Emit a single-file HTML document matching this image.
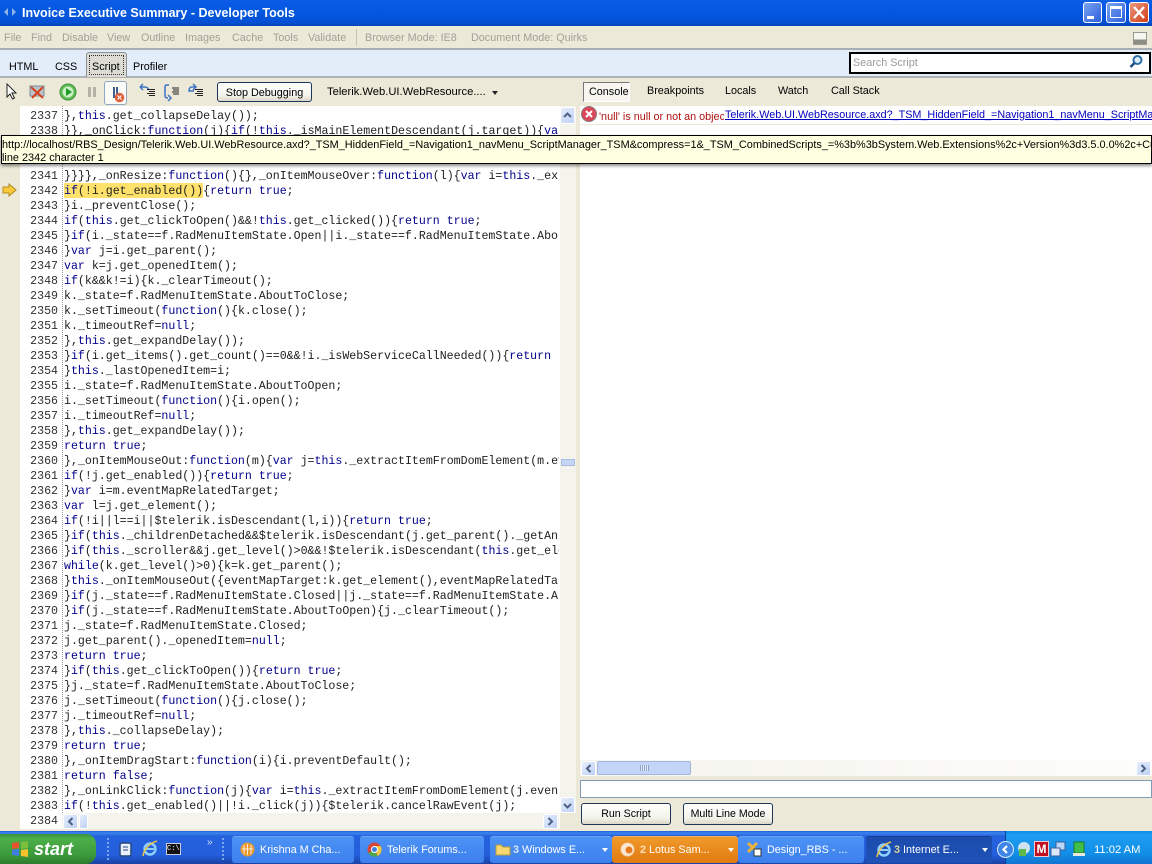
<!DOCTYPE html>
<html><head><meta charset="utf-8"><title>Invoice Executive Summary - Developer Tools</title>
<style>
html,body{margin:0;padding:0;width:1152px;height:864px;overflow:hidden;background:#ece9d8;font-family:"Liberation Sans",sans-serif;font-size:10.8px;color:#000}
.a,.t{position:absolute}
.t{white-space:nowrap;line-height:14px}
.m{color:#a3a196}
#code{position:absolute;left:64px;top:109px;width:495px;height:720px;overflow:hidden;font:11.6px/15px "Liberation Mono",monospace;color:#202020;white-space:pre}
#nums{position:absolute;left:20px;top:109px;width:38px;height:720px;overflow:hidden;text-align:right;font:11.6px/15px "Liberation Mono",monospace;color:#303030;white-space:pre}
#code i{font-style:normal;color:#00008b}
.hl{background:#ffe26b}
.sb{position:absolute;width:15px;height:15px;background:linear-gradient(135deg,#e6eefc,#bdd0f5);border:1px solid #fff;box-sizing:border-box;border-radius:2px}
.sb svg{position:absolute;left:1px;top:1px}
.btn{position:absolute;box-sizing:border-box;border:1px solid #1c3558;border-radius:3px;background:linear-gradient(#fff,#f3f2ea 70%,#dcd8c8);text-align:center;line-height:20px}
.tb{position:absolute;top:836px;height:27px;box-sizing:border-box;border-radius:3px;background:linear-gradient(#4d92f4,#3c80ee);color:#fff;font-size:10.8px;line-height:27px;white-space:nowrap;overflow:hidden;border-top:1px solid #6aa5f7}
</style></head><body>
<div class="a" style="left:0;top:0;width:1152px;height:26px;background:linear-gradient(#0a5fe0 0,#0a5be8 2px,#0358df 12px,#0450d6 22px,#0644b8)"></div>
<svg class="a" style="left:2px;top:5px" width="16" height="14"><path d="M2 7l4-4v8zM14 7l-4-4v8z" fill="#8fb2e6"/></svg>
<div class="t" style="left:22px;top:5px;color:#fff;font-weight:bold;font-size:12.5px;line-height:16px">Invoice Executive Summary - Developer Tools</div>
<div class="a" style="left:1083px;top:2px;width:19px;height:21px;box-sizing:border-box;background:linear-gradient(135deg,#7aa4f2,#2c5fdc);border:1px solid #fff;border-radius:3px"><div class="a" style="left:3px;top:13px;width:7px;height:3px;background:#fff"></div></div>
<div class="a" style="left:1106px;top:2px;width:20px;height:21px;box-sizing:border-box;background:linear-gradient(135deg,#7aa4f2,#2c5fdc);border:1px solid #fff;border-radius:3px"><div class="a" style="left:3px;top:3px;width:12px;height:12px;box-sizing:border-box;border:1.5px solid #fff;border-top-width:3px"></div></div>
<div class="a" style="left:1129px;top:2px;width:20px;height:21px;box-sizing:border-box;background:linear-gradient(135deg,#ea9a80,#d03c14);border:1px solid #fff;border-radius:3px"><svg class="a" style="left:2px;top:2px" width="14" height="15"><path d="M2 2l10 11M12 2L2 13" stroke="#fff" stroke-width="2.400"/></svg></div>

<div class="a" style="left:0;top:26px;width:1152px;height:22px;background:#ece9d8;border-bottom:2px solid #a9adb4"></div>
<div class="t m" style="left:4px;top:31px">File</div><div class="t m" style="left:31px;top:31px">Find</div><div class="t m" style="left:62px;top:31px">Disable</div><div class="t m" style="left:107px;top:31px">View</div><div class="t m" style="left:141px;top:31px">Outline</div><div class="t m" style="left:185px;top:31px">Images</div><div class="t m" style="left:232px;top:31px">Cache</div><div class="t m" style="left:273px;top:31px">Tools</div><div class="t m" style="left:308px;top:31px">Validate</div>
<div class="a" style="left:356px;top:29px;width:1px;height:17px;background:#c8c5b4"></div>
<div class="t m" style="left:365px;top:31px">Browser Mode: IE8</div><div class="t m" style="left:471px;top:31px">Document Mode: Quirks</div>
<div class="a" style="left:1133px;top:32px;width:14px;height:13px;box-sizing:border-box;border:1px solid #9a9a92;background:linear-gradient(#f6f6f0 60%,#8e8e86 60%)"></div>

<div class="a" style="left:0;top:50px;width:1152px;height:26px;background:#e3edf9;border-bottom:2px solid #b0b3b5"></div>
<div class="t" style="left:9px;top:60px">HTML</div><div class="t" style="left:55px;top:60px">CSS</div>
<div class="a" style="left:86px;top:52px;width:41px;height:25px;box-sizing:border-box;border:1px solid #8c9097;border-bottom:0;border-radius:3px 3px 0 0;background:#dcdcd4"></div>
<div class="a" style="left:89px;top:55px;width:35px;height:20px;box-sizing:border-box;border:1px dotted #333"></div>
<div class="t" style="left:92px;top:60px">Script</div><div class="t" style="left:133px;top:60px">Profiler</div>
<div class="a" style="left:849px;top:52px;width:302px;height:22px;box-sizing:border-box;border:2px solid #000;background:#fff"></div>
<div class="t" style="left:853px;top:56px;color:#9a9a9a">Search Script</div>
<svg class="a" style="left:1128px;top:54px" width="16" height="16"><circle cx="9.500" cy="6" r="4" fill="#dceaf7" stroke="#2a6fa8" stroke-width="2"/><path d="M6.500 9L2.500 13" stroke="#1d4f86" stroke-width="2.600"/></svg>

<div class="a" style="left:0;top:78px;width:1152px;height:28px;background:#ece9d8"></div>
<svg class="a" style="left:5px;top:83px" width="15" height="18"><path d="M2 1v13l3-3 2.500 5 2-1-2.500-5h4z" fill="#fff" stroke="#222"/></svg>
<svg class="a" style="left:28px;top:84px" width="18" height="16"><rect x="2" y="2" width="14" height="10" fill="#b9c3c9" stroke="#7d8a94"/><path d="M3 3l12 11M15 3L4 14" stroke="#d8401e" stroke-width="2"/></svg>
<svg class="a" style="left:59px;top:83px" width="18" height="18"><circle cx="9" cy="9" r="8" fill="#5fbf52" stroke="#3f8e3a"/><circle cx="9" cy="9" r="5.500" fill="#cdeec6"/><path d="M7 5l6 4-6 4z" fill="#1d9a2a"/></svg>
<div class="a" style="left:88px;top:87px;width:3px;height:10px;background:#b4b2a6"></div><div class="a" style="left:93px;top:87px;width:3px;height:10px;background:#b4b2a6"></div>
<div class="a" style="left:104px;top:81px;width:23px;height:24px;box-sizing:border-box;border:1px solid #8fa6c4;border-radius:3px;background:#fbfbf8"></div>
<div class="a" style="left:113px;top:87px;width:2px;height:11px;background:#445d8c"></div><div class="a" style="left:116px;top:87px;width:2px;height:11px;background:#445d8c"></div>
<svg class="a" style="left:114px;top:92px" width="11" height="11"><circle cx="5.500" cy="5.500" r="4.800" fill="#e0603c"/><path d="M3.500 3.500l4 4M7.500 3.500l-4 4" stroke="#fff"/></svg>
<svg class="a" style="left:139px;top:83px" width="18" height="14"><path d="M1 4l3-3M1 4l3 3M1 4h5c2 0 3 1 4 3" fill="none" stroke="#3d74c4" stroke-width="1.500"/><path d="M8 6.500h8M10 8.500h6M8 10.500h8M10 12.500h6" stroke="#222"/></svg>
<svg class="a" style="left:163px;top:83px" width="18" height="20"><path d="M6 2H3.500C2.500 2 2 3 2 4v9c0 1.500 1 2 3 2M5 12l3 3-3 3" fill="none" stroke="#3d74c4" stroke-width="1.500"/><path d="M9 5h7M10 7h6M9 9h7M10 11h6" stroke="#222"/></svg>
<svg class="a" style="left:187px;top:83px" width="18" height="14"><path d="M9 4H5C3 4 2 5 2 8h5M6 1l3 3-3 3" fill="none" stroke="#3d74c4" stroke-width="1.500"/><path d="M8 6.500h8M10 8.500h6M8 10.500h8M10 12.500h6" stroke="#222"/></svg>
<div class="btn" style="left:217px;top:82px;width:95px;height:20px;line-height:20px">Stop Debugging</div>
<div class="t" style="left:327px;top:85px;font-size:11.2px">Telerik.Web.UI.WebResource....</div>
<div class="a" style="left:492px;top:91px;width:0;height:0;border:3px solid transparent;border-top:4px solid #222"></div>

<div class="a" style="left:20px;top:106px;width:540px;height:723px;background:#fff"></div>
<div class="a" style="left:62px;top:106px;height:723px;border-left:1px dotted #999"></div>
<div id="nums">2337
2338
2339
2340
2341
2342
2343
2344
2345
2346
2347
2348
2349
2350
2351
2352
2353
2354
2355
2356
2357
2358
2359
2360
2361
2362
2363
2364
2365
2366
2367
2368
2369
2370
2371
2372
2373
2374
2375
2376
2377
2378
2379
2380
2381
2382
2383
2384</div>
<div class="a hl" style="left:64px;top:183px;width:139px;height:15px"></div>
<div id="code">},<i>this</i>.get_collapseDelay());
}},_onClick:<i>function</i>(j){<i>if</i>(!<i>this</i>._isMainElementDescendant(j.target)){<i>var</i>
&nbsp;
&nbsp;
}}}},_onResize:<i>function</i>(){},_onItemMouseOver:<i>function</i>(l){<i>var</i> i=<i>this</i>._extractItem
<i>if</i>(!i.get_enabled()){<i>return true</i>;
}i._preventClose();
<i>if</i>(<i>this</i>.get_clickToOpen()&amp;&amp;!<i>this</i>.get_clicked()){<i>return true</i>;
}<i>if</i>(i._state==f.RadMenuItemState.Open||i._state==f.RadMenuItemState.AboutToOpen
}<i>var</i> j=i.get_parent();
<i>var</i> k=j.get_openedItem();
<i>if</i>(k&amp;&amp;k!=i){k._clearTimeout();
k._state=f.RadMenuItemState.AboutToClose;
k._setTimeout(<i>function</i>(){k.close();
k._timeoutRef=<i>null</i>;
},<i>this</i>.get_expandDelay());
}<i>if</i>(i.get_items().get_count()==0&amp;&amp;!i._isWebServiceCallNeeded()){<i>return</i>
}<i>this</i>._lastOpenedItem=i;
i._state=f.RadMenuItemState.AboutToOpen;
i._setTimeout(<i>function</i>(){i.open();
i._timeoutRef=<i>null</i>;
},<i>this</i>.get_expandDelay());
<i>return true</i>;
},_onItemMouseOut:<i>function</i>(m){<i>var</i> j=<i>this</i>._extractItemFromDomElement(m.eventMap
<i>if</i>(!j.get_enabled()){<i>return true</i>;
}<i>var</i> i=m.eventMapRelatedTarget;
<i>var</i> l=j.get_element();
<i>if</i>(!i||l==i||$telerik.isDescendant(l,i)){<i>return true</i>;
}<i>if</i>(<i>this</i>._childrenDetached&amp;&amp;$telerik.isDescendant(j.get_parent()._getAnimated
}<i>if</i>(<i>this</i>._scroller&amp;&amp;j.get_level()&gt;0&amp;&amp;!$telerik.isDescendant(<i>this</i>.get_element
<i>while</i>(k.get_level()&gt;0){k=k.get_parent();
}<i>this</i>._onItemMouseOut({eventMapTarget:k.get_element(),eventMapRelatedTarget:i
}<i>if</i>(j._state==f.RadMenuItemState.Closed||j._state==f.RadMenuItemState.AboutToClose
}<i>if</i>(j._state==f.RadMenuItemState.AboutToOpen){j._clearTimeout();
j._state=f.RadMenuItemState.Closed;
j.get_parent()._openedItem=<i>null</i>;
<i>return true</i>;
}<i>if</i>(<i>this</i>.get_clickToOpen()){<i>return true</i>;
}j._state=f.RadMenuItemState.AboutToClose;
j._setTimeout(<i>function</i>(){j.close();
j._timeoutRef=<i>null</i>;
},<i>this</i>._collapseDelay);
<i>return true</i>;
},_onItemDragStart:<i>function</i>(i){i.preventDefault();
<i>return false</i>;
},_onLinkClick:<i>function</i>(j){<i>var</i> i=<i>this</i>._extractItemFromDomElement(j.eventMap
<i>if</i>(!<i>this</i>.get_enabled()||!i._click(j)){$telerik.cancelRawEvent(j);</div>
<svg class="a" style="left:2px;top:183px" width="15" height="14"><path d="M1 4h6V1l7 6-7 6v-3H1z" fill="#fbc93a" stroke="#b08a20"/></svg>

<div class="a" style="left:560px;top:106px;width:16px;height:707px;background:#f4f3ec"></div>
<div class="sb" style="left:560px;top:107px;height:17px"><svg width="11" height="13"><path d="M2 8l3.500-3.500L9 8" fill="none" stroke="#4d6185" stroke-width="2"/></svg></div>
<div class="sb" style="left:560px;top:797px;height:16px"><svg width="11" height="13"><path d="M2 5l3.500 3.500L9 5" fill="none" stroke="#4d6185" stroke-width="2"/></svg></div>
<div class="a" style="left:561px;top:459px;width:14px;height:7px;background:#c6d6f7;border:1px solid #a9bce2;box-sizing:border-box"></div>
<div class="a" style="left:62px;top:813px;width:497px;height:16px;background:#f4f3ec"></div>
<div class="sb" style="left:63px;top:814px"><svg width="11" height="11"><path d="M7.500 2L4 5.500 7.500 9" fill="none" stroke="#4d6185" stroke-width="2"/></svg></div>
<div class="sb" style="left:79px;top:814px;width:9px"></div>
<div class="sb" style="left:543px;top:814px"><svg width="11" height="11"><path d="M3.500 2L7 5.500 3.500 9" fill="none" stroke="#4d6185" stroke-width="2"/></svg></div>

<div class="a" style="left:580px;top:106px;width:572px;height:654px;background:#fff"></div>
<div class="a" style="left:583px;top:82px;width:47px;height:20px;box-sizing:border-box;border:1px solid #777;border-right-color:#fff;border-bottom-color:#fff;background:#f6f5ef"></div>
<div class="t" style="left:589px;top:85px">Console</div><div class="t" style="left:647px;top:84px">Breakpoints</div><div class="t" style="left:725px;top:84px">Locals</div><div class="t" style="left:778px;top:84px">Watch</div><div class="t" style="left:831px;top:84px">Call Stack</div>
<div class="a" style="left:580px;top:124px;width:572px;height:1px;background:#ece9d8"></div>
<svg class="a" style="left:581px;top:106px" width="16" height="16"><circle cx="8" cy="8" r="7.500" fill="#d9475a" stroke="#8a7a7a"/><path d="M5 5l6 6M11 5l-6 6" stroke="#fff" stroke-width="2"/></svg>
<div class="t" style="left:599px;top:110px;width:125px;overflow:hidden;color:#b01010">'null' is null or not an object</div>
<div class="t" style="left:725px;top:108px;width:427px;overflow:hidden;color:#0000c0;text-decoration:underline">Telerik.Web.UI.WebResource.axd?_TSM_HiddenField_=Navigation1_navMenu_ScriptManager_TSM</div>

<div class="a" style="left:1px;top:135px;width:1151px;height:29px;box-sizing:border-box;background:#ffffe1;border:1px solid #000;box-shadow:0 2px 3px rgba(0,0,0,.45)"></div>
<div class="t" style="left:2px;top:138px;width:1150px;overflow:hidden;color:#000;font-size:10.9px">http://localhost/RBS_Design/Telerik.Web.UI.WebResource.axd?_TSM_HiddenField_=Navigation1_navMenu_ScriptManager_TSM&amp;compress=1&amp;_TSM_CombinedScripts_=%3b%3bSystem.Web.Extensions%2c+Version%3d3.5.0.0%2c+Culture</div>
<div class="t" style="left:2px;top:151px;font-size:10.9px">line 2342 character 1</div>

<div class="a" style="left:580px;top:760px;width:572px;height:16px;background:linear-gradient(90deg,#f4f3ec,#fdfdfb)"></div>
<div class="sb" style="left:581px;top:761px"><svg width="11" height="11"><path d="M7.500 2L4 5.500 7.500 9" fill="none" stroke="#4d6185" stroke-width="2"/></svg></div>
<div class="a" style="left:597px;top:761px;width:94px;height:14px;box-sizing:border-box;background:#c4d4f6;border:1px solid #a3b7e0;border-radius:2px"></div>
<div class="a" style="left:640px;top:765px;width:9px;height:6px;background:repeating-linear-gradient(90deg,#8ea3cc 0 1px,#e6eefc 1px 2px)"></div>
<div class="sb" style="left:1136px;top:761px"><svg width="11" height="11"><path d="M3.500 2L7 5.500 3.500 9" fill="none" stroke="#4d6185" stroke-width="2"/></svg></div>
<div class="a" style="left:580px;top:780px;width:572px;height:18px;box-sizing:border-box;background:#fff;border:1px solid #7f9db9"></div>
<div class="btn" style="left:581px;top:803px;width:90px;height:22px;font-size:10.6px">Run Script</div>
<div class="btn" style="left:683px;top:803px;width:90px;height:22px;font-size:10.6px">Multi Line Mode</div>

<div class="a" style="left:0;top:831px;width:1152px;height:33px;background:linear-gradient(#1f5fd8 0,#3d86ee 2px,#2662de 5px,#245edb 24px,#1941a5)"></div>
<div class="a" style="left:0;top:834px;width:96px;height:30px;border-radius:0 10px 10px 0;background:linear-gradient(#3a8f3a,#4caf48 15%,#3c9a3c 70%,#2d7a2d)"></div>
<svg class="a" style="left:10px;top:840px" width="20" height="18"><path d="M2 3l7-1v6l-7 1z" fill="#e5532d"/><path d="M11 2l7-1v7l-7 1z" fill="#7cbf3a"/><path d="M2 10l7-1v7l-7-1z" fill="#3f7fe0"/><path d="M11 10l7-1v8l-7-1z" fill="#f5c22e"/></svg>
<div class="t" style="left:34px;top:839px;color:#fff;font-weight:bold;font-style:italic;font-size:18px;line-height:20px">start</div>
<div class="a" style="left:107px;top:838px;height:22px;border-left:2px dotted #7aa8ee"></div>
<svg class="a" style="left:118px;top:841px" width="16" height="16"><rect x="2" y="2" width="11" height="13" rx="2" fill="#e8effa" stroke="#27477f" stroke-width="1.500"/><path d="M5 6h5M5 9h5" stroke="#27477f"/></svg>
<svg class="a" style="left:141px;top:840px" width="18" height="18"><ellipse cx="9" cy="9" rx="5.500" ry="5.500" fill="none" stroke="#8fd0ff" stroke-width="2.400"/><path d="M5 9h8" stroke="#8fd0ff" stroke-width="2"/><path d="M2 16C3 9 9 3 16 1" fill="none" stroke="#e8c24a" stroke-width="1.500"/></svg>
<div class="a" style="left:166px;top:843px;width:15px;height:12px;background:#111;border:1px solid #ccd;box-sizing:border-box;color:#fff;font:7px/10px 'Liberation Mono',monospace">C:\</div>
<div class="t" style="left:207px;top:836px;color:#cfe0fb;font-size:10px">»</div>
<div class="a" style="left:222px;top:838px;height:22px;border-left:2px dotted #7aa8ee"></div>

<div class="tb" style="left:232px;width:122px;padding-left:28px">Krishna M Cha...</div>
<svg class="a" style="left:240px;top:842px" width="15" height="15"><circle cx="7.500" cy="7.500" r="7" fill="#e89a32"/><path d="M4 3v9M7.500 2v11M11 3v9M2 7h11" stroke="#fff" stroke-width=".8"/></svg>
<div class="tb" style="left:360px;width:124px;padding-left:27px">Telerik Forums...</div>
<svg class="a" style="left:367px;top:842px" width="15" height="15"><circle cx="7.500" cy="7.500" r="7" fill="#d8443a"/><path d="M7.500 7.500L1.500 11a7 7 0 0 0 9 3z" fill="#4aa94a"/><path d="M7.500 4h6a7 7 0 0 1-3 10z" fill="#f0c63c"/><circle cx="7.500" cy="7.500" r="3" fill="#3f7fe0" stroke="#fff"/></svg>
<div class="tb" style="left:490px;width:122px;padding-left:23px"><b style="color:#d8e6fb">3</b> Windows E...</div>
<svg class="a" style="left:495px;top:842px" width="16" height="14"><path d="M1 3h5l2 2h7v8H1z" fill="#f6d873" stroke="#b99a3c"/></svg>
<div class="a" style="left:602px;top:848px;width:0;height:0;border:3px solid transparent;border-top:4px solid #fff"></div>
<div class="tb" style="left:612px;width:126px;padding-left:28px;background:linear-gradient(#f09a2c,#e07a10);border-top-color:#f4b060"><b style="color:#fde2b8">2</b> Lotus Sam...</div>
<svg class="a" style="left:620px;top:842px" width="15" height="15"><circle cx="7.500" cy="7.500" r="6.500" fill="#fbe8d4" stroke="#f0d0a8"/><circle cx="9" cy="8" r="3.500" fill="#e87a1c"/></svg>
<div class="a" style="left:728px;top:848px;width:0;height:0;border:3px solid transparent;border-top:4px solid #fff"></div>
<div class="tb" style="left:738px;width:126px;padding-left:29px">Design_RBS - ...</div>
<svg class="a" style="left:746px;top:841px" width="16" height="16"><path d="M2 2l9 9M11 2l-9 9" stroke="#e8b23c" stroke-width="3"/><rect x="8" y="8" width="7" height="7" fill="#fff" stroke="#333"/></svg>
<div class="tb" style="left:866px;width:126px;padding-left:28px;background:linear-gradient(#1c4cad,#1e52b7);border-top-color:#173d92"><b style="color:#ddd1a0">3</b> Internet E...</div>
<svg class="a" style="left:875px;top:841px" width="18" height="18"><ellipse cx="9" cy="9" rx="5.500" ry="5.500" fill="none" stroke="#8fd0ff" stroke-width="2.400"/><path d="M5 9h8" stroke="#8fd0ff" stroke-width="2"/><path d="M2 16C3 9 9 3 16 1" fill="none" stroke="#e8c24a" stroke-width="1.500"/></svg>
<div class="a" style="left:982px;top:848px;width:0;height:0;border:3px solid transparent;border-top:4px solid #fff"></div>
<div class="a" style="left:1005px;top:831px;width:147px;height:33px;background:linear-gradient(#0f8be8 0,#1d9cf0 4px,#1290e8 22px,#0f74d0);border-left:1px solid #0c3f96;box-sizing:border-box"></div>
<div class="a" style="left:997px;top:841px;width:17px;height:17px;border-radius:9px;background:#3d86e8;border:1px solid #dcebfd;box-sizing:border-box"><svg class="a" style="left:2px;top:2px" width="11" height="11"><path d="M7 2L3.500 5.500 7 9" fill="none" stroke="#fff" stroke-width="2.200"/></svg></div>
<svg class="a" style="left:1016px;top:841px" width="16" height="17"><circle cx="8" cy="7" r="6" fill="#cfe3ee"/><rect x="3" y="8" width="7" height="7" fill="#5fb84a"/></svg>
<div class="a" style="left:1034px;top:841px;width:15px;height:16px;background:#c01020;border:1px solid #f3c8d0;box-sizing:border-box;color:#fff;font:bold 12px/14px 'Liberation Sans',sans-serif;text-align:center">M</div>
<svg class="a" style="left:1050px;top:841px" width="16" height="16"><rect x="6" y="1" width="9" height="8" fill="#bcd6f5" stroke="#3c5f9e"/><rect x="1" y="7" width="9" height="8" fill="#dbe8fa" stroke="#3c5f9e"/></svg>
<svg class="a" style="left:1072px;top:841px" width="14" height="16"><rect x="2" y="1" width="10" height="11" fill="#3fbf4a" stroke="#1d7a2a"/><rect x="1" y="12" width="12" height="3" fill="#e8e8e0"/></svg>
<div class="t" style="left:1094px;top:843px;color:#fff;font-size:11.2px">11:02 AM</div>
</body></html>
